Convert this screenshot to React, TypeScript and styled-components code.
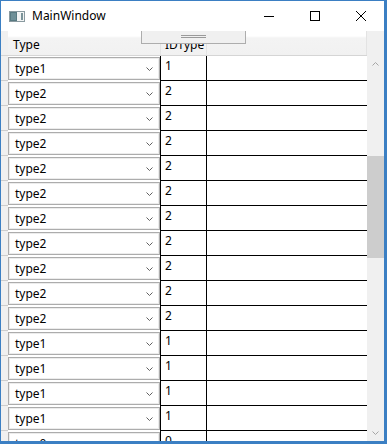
import React from "react";
import styled, { createGlobalStyle } from "styled-components";

const GlobalStyle = createGlobalStyle`
  html, body { margin: 0; padding: 0; background: #ffffff; overflow: hidden; }
  body { font-family: "Noto Sans", "Open Sans", sans-serif; font-size: 12px; color: #000; }
  * { box-sizing: border-box; }
`;

const Window = styled.div`
  width: 387px;
  height: 444px;
  border-style: solid;
  border-color: #3b7fc3;
  border-width: 1px 3px 3px 1px;
  display: flex;
  flex-direction: column;
  background: #ffffff;
`;

const TitleBar = styled.div`
  height: 30px;
  flex-shrink: 0;
  display: flex;
  align-items: center;
  padding-left: 8px;
  background: #ffffff;
`;

const Title = styled.span`
  margin-left: 7px;
  font-size: 12px;
  line-height: 16px;
  color: #000;
`;

const Captions = styled.div`
  margin-left: auto;
  display: flex;
  height: 100%;
`;

const CaptionButton = styled.div`
  width: 46px;
  height: 30px;
  display: flex;
  align-items: center;
  justify-content: center;
`;

const Client = styled.div`
  flex: 1;
  min-height: 0;
  display: flex;
  position: relative;
  overflow: hidden;
  background: #ffffff;
`;

const GridArea = styled.div`
  flex: 1;
  min-width: 0;
  display: flex;
  flex-direction: column;
`;

const HeaderRow = styled.div`
  height: 25px;
  flex-shrink: 0;
  display: flex;
  border-bottom: 1px solid #d5d5d5;
`;

const HeaderCorner = styled.div`
  width: 7px;
  background: #f0f0f0;
`;

const HeaderCell = styled.div<{ $w?: number; $pad: number }>`
  ${(p) => (p.$w ? `width: ${p.$w}px;` : "flex: 1;")}
  padding: 6px 0 0 ${(p) => p.$pad}px;
  line-height: 16px;
  white-space: nowrap;
  overflow: hidden;
  background: linear-gradient(to bottom, #ffffff 0px, #ffffff 5px, #f3f3f3 7px, #f1f1f1 100%);
  border-right: 1px solid #e3e3e3;
`;

const Row = styled.div`
  height: 25px;
  flex-shrink: 0;
  display: flex;
`;

const RowHeader = styled.div`
  width: 7px;
  background: #f0f0f0;
  border-bottom: 1px solid #cdcdcd;
`;

const TypeCell = styled.div`
  width: 153px;
  padding-top: 1px;
  border-right: 1px solid #000;
`;

const ComboBox = styled.div`
  height: 23px;
  border: 1px solid #acacac;
  box-shadow: inset 0 0 0 1px #ececec;
  background: #ffffff;
  display: flex;
  align-items: center;
  padding: 0 6px 0 6px;
  line-height: 16px;
`;

const ComboText = styled.span`
  flex: 1;
  padding-top: 1px;
`;

const IdCell = styled.div`
  width: 46px;
  padding: 2px 0 0 4px;
  line-height: 16px;
  border-right: 1px solid #000;
  border-bottom: 1px solid #000;
`;

const FillCell = styled.div`
  flex: 1;
  border-bottom: 1px solid #000;
`;

const ScrollBar = styled.div`
  width: 17px;
  flex-shrink: 0;
  display: flex;
  flex-direction: column;
  background: #f0f0f0;
`;

const ScrollCorner = styled.div`
  height: 24px;
  flex-shrink: 0;
`;

const ScrollButton = styled.div`
  height: 17px;
  flex-shrink: 0;
  display: flex;
  align-items: center;
  justify-content: center;
`;

const Track = styled.div`
  flex: 1;
  min-height: 0;
`;

const Thumb = styled.div`
  background: #cdcdcd;
`;

const Gripper = styled.div`
  position: absolute;
  left: 140px;
  top: 0;
  width: 105px;
  height: 13px;
  background: #f0f0f0;
  border: 1px solid #adadad;
  border-top: none;
  display: flex;
  flex-direction: column;
  align-items: center;
  padding-top: 4px;
  gap: 1px;
`;

const GripLine = styled.div`
  width: 25px;
  height: 1px;
  background: #9a9a9a;
`;

const rows: [string, number][] = [
  ["type1", 1],
  ...Array.from({ length: 10 }, () => ["type2", 2] as [string, number]),
  ...Array.from({ length: 4 }, () => ["type1", 1] as [string, number]),
  ["type0", 0],
];

const AppIcon = () => (
  <svg width="16" height="11" viewBox="0 0 16 11">
    <rect x="0.5" y="0.5" width="15" height="10" fill="#f2f4f4" stroke="#8a9aa0" />
    <rect x="1" y="1" width="7" height="9" fill="#587a82" />
    <rect x="2" y="2" width="5" height="7" fill="#6f9098" />
    <rect x="12" y="2" width="2" height="7" fill="#7b9399" />
  </svg>
);

const Chevron = ({ up, color }: { up?: boolean; color: string }) => (
  <svg width="7" height="4" viewBox="0 0 7 4">
    <path
      d={up ? "M0.5 3.5 L3.5 0.5 L6.5 3.5" : "M0.5 0.5 L3.5 3.5 L6.5 0.5"}
      fill="none"
      stroke={color}
      strokeWidth="1"
    />
  </svg>
);

export default function App() {
  return (
    <>
      <GlobalStyle />
      <Window>
        <TitleBar>
          <AppIcon />
          <Title>MainWindow</Title>
          <Captions>
            <CaptionButton>
              <svg width="10" height="10" viewBox="0 0 10 10">
                <path d="M0 5.5 H10" stroke="#000" strokeWidth="1" />
              </svg>
            </CaptionButton>
            <CaptionButton>
              <svg width="10" height="10" viewBox="0 0 10 10">
                <rect x="0.5" y="0.5" width="9" height="9" fill="none" stroke="#000" strokeWidth="1" />
              </svg>
            </CaptionButton>
            <CaptionButton>
              <svg width="10" height="10" viewBox="0 0 10 10">
                <path d="M0 0 L10 10 M10 0 L0 10" stroke="#000" strokeWidth="1" />
              </svg>
            </CaptionButton>
          </Captions>
        </TitleBar>
        <Client>
          <GridArea>
            <HeaderRow>
              <HeaderCorner />
              <HeaderCell $w={153} $pad={5}>Type</HeaderCell>
              <HeaderCell $w={46} $pad={4}>IDType</HeaderCell>
              <HeaderCell $pad={4} />
            </HeaderRow>
            {rows.map(([t, id], i) => (
              <Row key={i}>
                <RowHeader />
                <TypeCell>
                  <ComboBox>
                    <ComboText>{t}</ComboText>
                    <Chevron color="#606060" />
                  </ComboBox>
                </TypeCell>
                <IdCell>{id}</IdCell>
                <FillCell />
              </Row>
            ))}
          </GridArea>
          <ScrollBar>
            <ScrollCorner />
            <ScrollButton>
              <Chevron up color="#a6a6a6" />
            </ScrollButton>
            <Track>
              <Thumb style={{ marginTop: 84, height: 102 }} />
            </Track>
            <ScrollButton>
              <Chevron color="#a6a6a6" />
            </ScrollButton>
          </ScrollBar>
          <Gripper>
            <GripLine />
            <GripLine />
          </Gripper>
        </Client>
      </Window>
    </>
  );
}
